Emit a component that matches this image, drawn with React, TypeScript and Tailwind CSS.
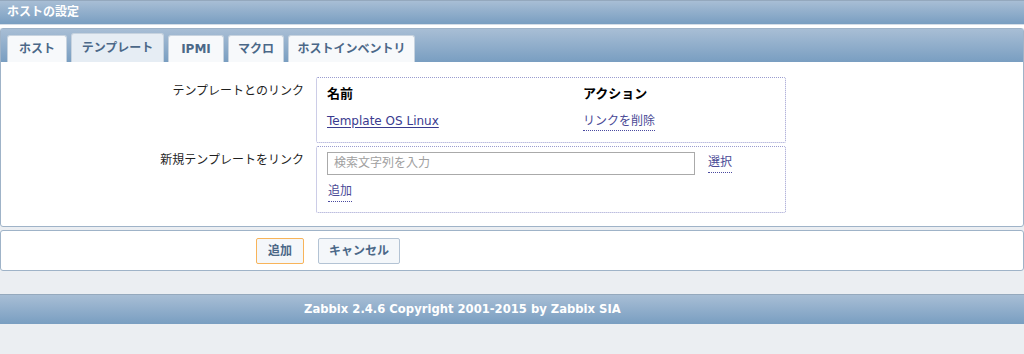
const jp = "font-['DejaVu_Sans','Noto_Sans_CJK_JP',sans-serif]";

const tabs = [
    { label: 'ホスト', w: 'w-[60px]' },
    { label: 'テンプレート', w: 'w-[93px]' },
    { label: 'IPMI', w: 'w-[56px]' },
    { label: 'マクロ', w: 'w-[56px]' },
    { label: 'ホストインベントリ', w: 'w-[127px]' },
];

export default function App() {
    return (
        <div className={`h-[354px] w-[1024px] overflow-hidden bg-[#ebeef2] ${jp}`}>
            {/* Header */}
            <div className="h-[24px] border-t border-[#94a8bd] bg-gradient-to-b from-[#a8bed5] to-[#799ec1] pl-[7px] text-[12px] leading-[22px] font-bold text-white">
                ホストの設定
            </div>
            <div className="h-[4px] border-t border-[#d5dee8] bg-white" />

            {/* Tabs panel */}
            <div className="rounded-[3px] border border-[#9fb3c8] bg-white">
                <div className="flex h-[33px] items-end gap-[4px] bg-gradient-to-b from-[#a8bed5] to-[#799ec1] pl-[6px]">
                    {tabs.map((t, i) => (
                        <div
                            key={t.label}
                            className={`flex items-center justify-center whitespace-nowrap rounded-t-[3px] border border-b-0 border-[#c7d3df] text-[12px] font-bold text-[#4b6888] ${t.w} ${
                                i === 1 ? 'h-[29px] bg-[#e6edf4]' : 'h-[27px] bg-[#f7f9fb]'
                            }`}
                        >
                            {t.label}
                        </div>
                    ))}
                </div>

                <div className="pt-[15px] pb-[13px] text-[12px]">
                    <div className="flex">
                        <div className="w-[304px] pt-[5px] pr-[1px] text-right text-[#1f1f1f]">テンプレートとのリンク</div>
                        <div className="ml-[11px] h-[66px] w-[470px] rounded-[2px] border border-dotted border-[#9a9ccf] px-[10px] pt-[6px]">
                            <div className="flex text-[13px] font-bold text-black">
                                <div className="w-[256px]">名前</div>
                                <div>アクション</div>
                            </div>
                            <div className="mt-[8px] flex">
                                <div className="w-[256px]">
                                    <span className="text-[#3a3a8f] underline underline-offset-2">Template OS Linux</span>
                                </div>
                                <div>
                                    <span className="border-b border-dotted border-[#4a4aa0] pb-[2px] text-[#4a4a96]">リンクを削除</span>
                                </div>
                            </div>
                        </div>
                    </div>

                    <div className="mt-[3px] flex">
                        <div className="w-[304px] pt-[5px] pr-[1px] text-right text-[#1f1f1f]">新規テンプレートをリンク</div>
                        <div className="ml-[11px] h-[67px] w-[470px] rounded-[2px] border border-dotted border-[#9a9ccf] px-[10px] pt-[5px]">
                            <div className="flex items-start">
                                <div className="h-[23px] w-[368px] border border-[#aaaaaa] pl-[6px] text-[12px] leading-[21px] text-[#a0a0a0]">
                                    検索文字列を入力
                                </div>
                                <div className="ml-[13px] mt-[1px]">
                                    <span className="border-b border-dotted border-[#4a4aa0] pb-[3px] text-[#4a4a96]">選択</span>
                                </div>
                            </div>
                            <div className="mt-[7px] pl-[1px]">
                                <span className="border-b border-dotted border-[#4a4aa0] pb-[3px] text-[#4a4a96]">追加</span>
                            </div>
                        </div>
                    </div>
                </div>
            </div>

            {/* Buttons */}
            <div className="mt-[3px] flex h-[41px] items-center gap-[14px] rounded-[3px] border border-[#9fb3c8] bg-white pl-[255px]">
                <button className="h-[26px] w-[48px] rounded-[2px] border border-[#f8b45a] bg-[#f4f7fa] text-[12px] font-bold text-[#4b6888]">
                    追加
                </button>
                <button className="h-[26px] w-[82px] rounded-[2px] border border-[#b3c3d4] bg-[#f4f7fa] text-[12px] font-bold text-[#4b6888]">
                    キャンセル
                </button>
            </div>

            {/* Footer */}
            <div className="mt-[23px] h-[30px] border-t border-[#95a9bd] bg-gradient-to-b from-[#a8bed5] to-[#799ec1] pl-[304px] text-[11.6px] leading-[28px] font-bold text-white">
                Zabbix 2.4.6 Copyright 2001-2015 by Zabbix SIA
            </div>
        </div>
    );
}
